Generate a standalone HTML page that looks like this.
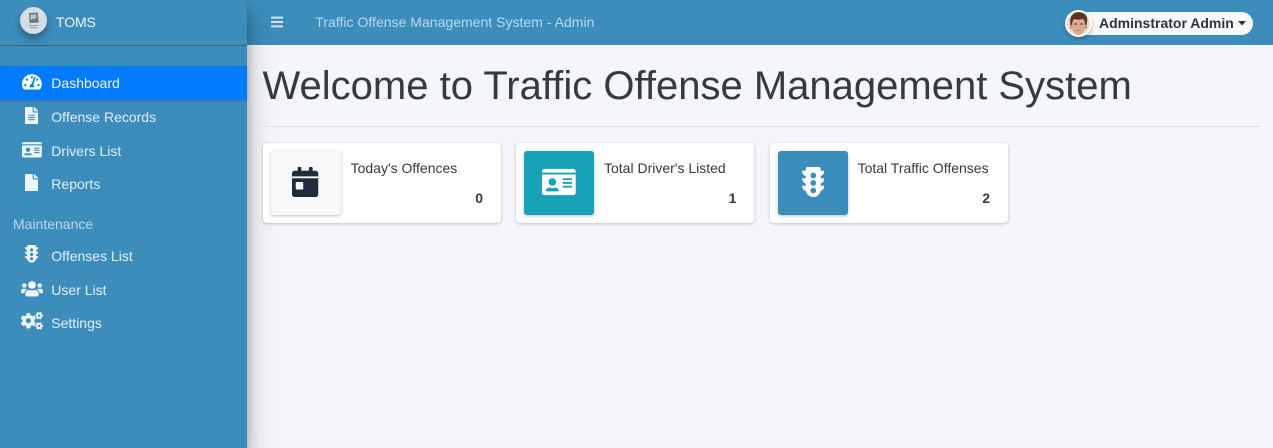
<!DOCTYPE html>
<html><head><meta charset="utf-8"><title>TOMS</title>
<style>
*{box-sizing:border-box}
html,body{margin:0;padding:0;width:1273px;height:448px;overflow:hidden;background:#f4f6f9;font-family:"Liberation Sans",sans-serif;color:#343a40;font-size:14px}
div,span,svg{position:absolute;white-space:nowrap}
#top{left:0;top:0;width:1273px;height:45px;background:#3c8dbc}
#side{left:0;top:0;width:247px;height:448px;background:#3c8dbc;box-shadow:0 14px 28px rgba(0,0,0,.25),0 10px 10px rgba(0,0,0,.22)}
#line{left:0;top:45px;width:247px;height:1px;background:#46606f}
#active{left:0;top:66px;width:247px;height:34px;background:#007bff;box-shadow:0 1px 3px rgba(0,0,0,.2)}
.nav{left:51.300px;font-size:14px;line-height:20px;color:#e4eefa}
.nav.a{color:#f0f6ff}
.i{fill:#eef5fd}
.card{top:143px;width:238px;height:80px;background:#fff;border-radius:4px;box-shadow:0 0 1px rgba(0,0,0,.125),0 1px 3px rgba(0,0,0,.2)}
.box{left:8px;top:8px;width:70px;height:64px;border-radius:3px;box-shadow:0 1px 3px rgba(0,0,0,.25)}
.lbl{top:15px;font-size:14px;line-height:20px;color:#343a40}
.num{top:45px;right:18px;font-size:14px;line-height:20px;font-weight:700;color:#343a40}
</style></head><body>
<div id="top"></div>
<div id="side"></div>
<div id="line"></div>

<div style="left:20px;top:7px;width:27px;height:27px;border-radius:50%;background:#d4dee5;box-shadow:0 5px 8px rgba(0,0,0,.3)"></div>
<svg style="left:27px;top:12px" width="13" height="18" viewBox="0 0 13 18"><path d="M2 1l8-.5 1 1 .5 9-9 .5z" fill="#6d777d"/><path d="M3.500 2.500h6v3l-2 2-2-1-2 2z" fill="#b9c3c9"/><path d="M1.500 13h10v1h-10zM2.500 15.200h8v1h-8z" fill="#98a3a9"/></svg>
<div style="left:56px;top:12px;font-size:14px;letter-spacing:-.1px;line-height:20px;color:#f2f6fa">TOMS</div>

<div style="left:315.300px;top:12px;font-size:14px;line-height:20px;letter-spacing:.02px;color:#b9d9ef">Traffic Offense Management System - Admin</div>
<svg style="left:271px;top:15px" width="12.250" height="14" viewBox="0 0 448 512"><path fill="#d3e6f3" d="M16 132h416c8.837 0 16-7.163 16-16V76c0-8.837-7.163-16-16-16H16C7.163 60 0 67.163 0 76v40c0 8.837 7.163 16 16 16zm0 160h416c8.837 0 16-7.163 16-16v-40c0-8.837-7.163-16-16-16H16c-8.837 0-16 7.163-16 16v40c0 8.837 7.163 16 16 16zm0 160h416c8.837 0 16-7.163 16-16v-40c0-8.837-7.163-16-16-16H16c-8.837 0-16 7.163-16 16v40c0 8.837 7.163 16 16 16z"/></svg>

<div style="left:1069px;top:12px;width:184px;height:23px;border-radius:12px;background:#f8f9fb"></div>
<div style="left:1065px;top:10px;width:27px;height:27px;border-radius:50%;background:#fff;box-shadow:0 2px 4px rgba(0,0,0,.25)"></div>
<svg style="left:1067px;top:12px" width="23" height="23" viewBox="0 0 23 23"><defs><clipPath id="c"><circle cx="11.500" cy="11.500" r="11.500"/></clipPath></defs><g clip-path="url(#c)"><rect width="23" height="23" fill="#e8d8cf"/><path d="M3 11.500h17v5H3z" fill="#c48c6e"/><path d="M5 8c3 1 9 1 13-1 .8 3 .8 7 0 10-1 3-4 6-6.500 6S6 20 5 17c-.8-3-.8-6 0-9z" fill="#dcaa8e"/><path d="M3.500 12.500C2 5 6 0 12 0s10 5 7.500 12.500l-1.500.5c0-2.500-.5-4.500-1.800-6-3 1-6.500 1-9 .2C5.500 8.500 5 10.500 5 13z" fill="#5e3524"/><path d="M7 11.500h3v1H7zM13 11.500h3v1h-3z" fill="#4c3026"/><path d="M9.500 18h4v.8h-4z" fill="#a96a55"/></g></svg>
<div style="left:1099px;top:13px;font-size:14px;line-height:20px;font-weight:700;color:#2c3440">Adminstrator Admin</div>
<svg style="left:1238px;top:21px" width="8" height="5" viewBox="0 0 8 5"><path d="M0 0h8L4 4.500z" fill="#2c3440"/></svg>

<div id="active"></div>

<svg style="left:22px;top:73px" width="19.800" height="17.600" viewBox="0 0 576 512"><path fill="#f4f8ff" d="M288 32C128.940 32 0 160.940 0 320c0 52.800 14.250 102.260 39.060 144.800 5.610 9.620 16.300 15.200 27.440 15.200h443c11.140 0 21.830-5.580 27.440-15.200C561.750 422.260 576 372.800 576 320c0-159.060-128.940-288-288-288zm0 64c14.710 0 26.580 10.130 30.320 23.650-1.110 2.260-2.640 4.230-3.450 6.670l-9.220 27.670c-5.130 3.490-10.970 6.010-17.640 6.010-17.670 0-32-14.330-32-32S270.330 96 288 96zM96 384c-17.670 0-32-14.330-32-32s14.330-32 32-32 32 14.330 32 32-14.330 32-32 32zm48-160c-17.670 0-32-14.330-32-32s14.330-32 32-32 32 14.330 32 32-14.330 32-32 32zm246.770-72.410l-61.330 184C343.130 347.330 352 364.540 352 384c0 11.720-3.380 22.550-8.880 32H232.880c-5.500-9.450-8.880-20.280-8.880-32 0-33.940 26.500-61.430 59.900-63.590l61.340-184.010c4.170-12.560 17.730-19.450 30.360-15.170 12.570 4.190 19.350 17.790 15.170 30.360zm14.660 57.200l15.520-46.550c3.470-1.290 7.130-2.230 11.050-2.230 17.670 0 32 14.330 32 32s-14.330 32-32 32c-11.380-.01-20.890-6.280-26.570-15.220zM480 384c-17.670 0-32-14.330-32-32s14.330-32 32-32 32 14.330 32 32-14.330 32-32 32z"/></svg>
<div class="nav a" style="top:73px">Dashboard</div>

<svg style="left:25.200px;top:106.600px" width="13.200" height="17.600" viewBox="0 0 384 512"><path class="i" d="M224 136V0H24C10.700 0 0 10.700 0 24v464c0 13.300 10.700 24 24 24h336c13.300 0 24-10.700 24-24V160H248c-13.200 0-24-10.800-24-24zm64 236c0 6.600-5.400 12-12 12H108c-6.600 0-12-5.400-12-12v-8c0-6.600 5.400-12 12-12h168c6.600 0 12 5.400 12 12v8zm0-64c0 6.600-5.400 12-12 12H108c-6.600 0-12-5.400-12-12v-8c0-6.600 5.400-12 12-12h168c6.600 0 12 5.400 12 12v8zm0-72v8c0 6.600-5.400 12-12 12H108c-6.600 0-12-5.400-12-12v-8c0-6.600 5.400-12 12-12h168c6.600 0 12 5.400 12 12zm96-114.100v6.100H256V0h6.100c6.400 0 12.500 2.500 17 7l97.900 98c4.500 4.500 7 10.600 7 16.900z"/></svg>
<div class="nav" style="top:107px">Offense Records</div>

<svg style="left:21.900px;top:140.500px" width="19.800" height="17.600" viewBox="0 0 576 512"><path class="i" d="M528 32H48C21.500 32 0 53.500 0 80v16h576V80c0-26.500-21.500-48-48-48zM0 432c0 26.500 21.500 48 48 48h480c26.500 0 48-21.500 48-48V128H0v304zm352-232c0-4.400 3.600-8 8-8h144c4.400 0 8 3.600 8 8v16c0 4.400-3.600 8-8 8H360c-4.400 0-8-3.600-8-8v-16zm0 64c0-4.400 3.600-8 8-8h144c4.400 0 8 3.600 8 8v16c0 4.400-3.600 8-8 8H360c-4.400 0-8-3.600-8-8v-16zm0 64c0-4.400 3.600-8 8-8h144c4.400 0 8 3.600 8 8v16c0 4.400-3.600 8-8 8H360c-4.400 0-8-3.600-8-8v-16zM176 192c35.300 0 64 28.700 64 64s-28.700 64-64 64-64-28.700-64-64 28.700-64 64-64zM67.100 396.200C75.500 370.500 99.600 352 128 352h8.200c12.300 5.100 25.700 8 39.800 8s27.600-2.900 39.800-8h8.200c28.400 0 52.500 18.500 60.900 44.200 3.200 9.900-5.200 19.800-15.600 19.800H82.700c-10.400 0-18.800-10-15.600-19.800z"/></svg>
<div class="nav" style="top:141px">Drivers List</div>

<svg style="left:25.200px;top:173.700px" width="13.200" height="17.600" viewBox="0 0 384 512"><path class="i" d="M224 136V0H24C10.700 0 0 10.700 0 24v464c0 13.300 10.700 24 24 24h336c13.300 0 24-10.700 24-24V160H248c-13.200 0-24-10.800-24-24zm160-14.100v6.100H256V0h6.100c6.400 0 12.500 2.500 17 7l97.900 98c4.500 4.500 7 10.600 7 16.900z"/></svg>
<div class="nav" style="top:174px">Reports</div>

<div style="left:13px;top:214px;font-size:14px;line-height:20px;color:#bcd6ea">Maintenance</div>

<svg style="left:25.200px;top:245.200px" width="13.200" height="17.600" viewBox="0 0 384 512"><path class="i" d="M384 192h-64v-37.880c37.200-13.220 64-48.380 64-90.120h-64V32c0-17.670-14.330-32-32-32H96C78.330 0 64 14.330 64 32v32H0c0 41.740 26.800 76.900 64 90.120V192H0c0 41.740 26.800 76.900 64 90.120V320H0c0 42.840 28.250 78.690 66.990 91.050C79.420 468.720 130.600 512 192 512s112.580-43.280 125.010-100.950C355.750 398.690 384 362.840 384 320h-64v-37.880c37.200-13.220 64-48.380 64-90.120zM192 448c-26.510 0-48-21.490-48-48 0-26.500 21.490-48 48-48s48 21.490 48 48c0 26.510-21.490 48-48 48zm0-128c-26.510 0-48-21.490-48-48 0-26.500 21.490-48 48-48s48 21.490 48 48c0 26.510-21.490 48-48 48zm0-128c-26.510 0-48-21.490-48-48 0-26.500 21.490-48 48-48s48 21.490 48 48c0 26.510-21.490 48-48 48z"/></svg>
<div class="nav" style="top:246px">Offenses List</div>

<svg style="left:20.500px;top:280px" width="22" height="17.600" viewBox="0 0 640 512"><path class="i" d="M96 224c35.300 0 64-28.700 64-64s-28.700-64-64-64-64 28.700-64 64 28.700 64 64 64zm448 0c35.300 0 64-28.700 64-64s-28.700-64-64-64-64 28.700-64 64 28.700 64 64 64zm32 32h-64c-17.600 0-33.500 7.100-45.100 18.600 40.300 22.100 68.900 62 75.100 109.400h66c17.700 0 32-14.300 32-32v-32c0-35.300-28.700-64-64-64zm-256 0c61.900 0 112-50.100 112-112S381.900 32 320 32 208 82.100 208 144s50.100 112 112 112zm76.800 32h-8.300c-20.800 10-43.900 16-68.500 16s-47.600-6-68.500-16h-8.300C179.600 288 128 339.600 128 403.200V432c0 26.500 21.500 48 48 48h288c26.500 0 48-21.500 48-48v-28.800c0-63.600-51.600-115.200-115.200-115.200zm-223.700-13.400C161.500 263.100 145.600 256 128 256H64c-35.300 0-64 28.700-64 64v32c0 17.700 14.300 32 32 32h65.900c6.300-47.400 34.900-87.300 75.200-109.400z"/></svg>
<div class="nav" style="top:280px">User List</div>

<svg style="left:20.500px;top:312.200px" width="22" height="17.600" viewBox="0 0 640 512"><path class="i" d="M512.100 191l-8.200 14.300c-3 5.300-9.400 7.500-15.100 5.400-11.800-4.400-22.600-10.700-32.100-18.600-4.600-3.800-5.800-10.500-2.800-15.700l8.200-14.300c-6.900-8-12.300-17.300-15.900-27.400h-16.500c-6 0-11.200-4.300-12.200-10.300-2-12-2.100-24.600 0-37.100 1-6 6.200-10.400 12.200-10.400h16.500c3.600-10.100 9-19.400 15.900-27.400l-8.200-14.300c-3-5.200-1.900-11.900 2.800-15.700 9.500-7.900 20.400-14.200 32.100-18.600 5.700-2.100 12.100.1 15.100 5.400l8.200 14.300c10.500-1.900 21.200-1.900 31.700 0L552 6.300c3-5.300 9.400-7.500 15.100-5.400 11.800 4.400 22.600 10.700 32.100 18.600 4.600 3.800 5.800 10.500 2.800 15.700l-8.200 14.300c6.900 8 12.300 17.300 15.900 27.400h16.500c6 0 11.200 4.300 12.200 10.300 2 12 2.100 24.600 0 37.100-1 6-6.200 10.400-12.200 10.400h-16.500c-3.600 10.100-9 19.400-15.900 27.400l8.200 14.300c3 5.200 1.900 11.900-2.800 15.700-9.500 7.900-20.400 14.200-32.100 18.600-5.700 2.100-12.100-.1-15.100-5.400l-8.200-14.300c-10.400 1.900-21.200 1.900-31.700 0zm-10.500-58.800c38.500 29.600 82.400-14.300 52.800-52.800-38.500-29.700-82.400 14.300-52.800 52.800zM386.300 286.100l33.700 16.800c10.100 5.800 14.500 18.100 10.500 29.100-8.900 24.200-26.400 46.400-42.600 65.800-7.400 8.900-20.200 11.100-30.300 5.300l-29.100-16.800c-16 13.700-34.600 24.600-54.900 31.700v33.600c0 11.600-8.300 21.600-19.700 23.600-24.600 4.200-50.400 4.400-75.900 0-11.500-2-20-11.900-20-23.600V418c-20.300-7.200-38.900-18-54.900-31.700L74 403c-10 5.800-22.900 3.600-30.300-5.300-16.200-19.400-33.300-41.600-42.200-65.700-4-10.900.4-23.200 10.500-29.100l33.300-16.800c-3.900-20.900-3.900-42.400 0-63.400L12 205.800c-10.100-5.800-14.600-18.100-10.500-29 8.900-24.200 26-46.400 42.200-65.800 7.400-8.900 20.200-11.100 30.300-5.300l29.100 16.800c16-13.700 34.600-24.600 54.900-31.700V57.100c0-11.500 8.200-21.500 19.600-23.500 24.600-4.200 50.500-4.400 76-.1 11.500 2 20 11.900 20 23.600v33.600c20.300 7.200 38.900 18 54.900 31.700l29.100-16.800c10-5.800 22.900-3.600 30.300 5.300 16.200 19.400 33.200 41.600 42.100 65.800 4 10.900.1 23.200-10 29.100l-33.700 16.800c3.900 21 3.900 42.500 0 63.500zm-117.600 21.100c59.200-77-28.700-164.900-105.700-105.700-59.200 77 28.700 164.900 105.700 105.700zm243.400 182.700l-8.200 14.300c-3 5.300-9.400 7.500-15.100 5.400-11.800-4.400-22.600-10.700-32.100-18.600-4.600-3.800-5.800-10.500-2.800-15.700l8.200-14.300c-6.900-8-12.300-17.300-15.900-27.400h-16.500c-6 0-11.200-4.300-12.200-10.300-2-12-2.100-24.600 0-37.100 1-6 6.200-10.400 12.200-10.400h16.500c3.600-10.100 9-19.400 15.900-27.400l-8.200-14.300c-3-5.200-1.900-11.900 2.800-15.700 9.500-7.900 20.400-14.200 32.100-18.600 5.700-2.100 12.100.1 15.100 5.400l8.200 14.300c10.500-1.900 21.200-1.900 31.700 0l8.200-14.300c3-5.300 9.400-7.500 15.100-5.400 11.800 4.400 22.600 10.700 32.100 18.600 4.600 3.800 5.800 10.500 2.800 15.700l-8.200 14.300c6.900 8 12.300 17.300 15.900 27.400h16.500c6 0 11.200 4.300 12.200 10.300 2 12 2.100 24.600 0 37.100-1 6-6.200 10.400-12.200 10.400h-16.500c-3.600 10.100-9 19.400-15.900 27.400l8.200 14.300c3 5.200 1.900 11.900-2.800 15.700-9.500 7.900-20.400 14.200-32.100 18.600-5.700 2.100-12.100-.1-15.100-5.400l-8.200-14.300c-10.400 1.900-21.200 1.900-31.700 0zM501.600 431c38.500 29.600 82.400-14.300 52.800-52.800-38.500-29.600-82.400 14.300-52.800 52.800z"/></svg>
<div class="nav" style="top:313px">Settings</div>

<div style="left:262.500px;top:62px;font-size:40px;line-height:48px;color:#343a40">Welcome to Traffic Offense Management System</div>
<div style="left:263px;top:126px;width:998px;height:1px;background:#dee2e6"></div>

<div class="card" style="left:263px">
  <div class="box" style="background:#f8f9fa"></div>
  <svg style="left:29.300px;top:24.200px" width="26.250" height="30" viewBox="0 0 448 512"><path fill="#1f2d3d" d="M0 464c0 26.500 21.500 48 48 48h352c26.500 0 48-21.500 48-48V192H0v272zm64-192c0-8.800 7.200-16 16-16h96c8.800 0 16 7.200 16 16v96c0 8.800-7.200 16-16 16H80c-8.800 0-16-7.200-16-16v-96zM400 64h-48V16c0-8.800-7.200-16-16-16h-32c-8.800 0-16 7.200-16 16v48H160V16c0-8.800-7.200-16-16-16h-32c-8.800 0-16 7.200-16 16v48H48C21.500 64 0 85.500 0 112v48h448v-48c0-26.500-21.500-48-48-48z"/></svg>
  <div class="lbl" style="left:87.600px">Today's Offences</div>
  <div class="num">0</div>
</div>

<div class="card" style="left:516px">
  <div class="box" style="background:#17a2b8"></div>
  <svg style="left:26.100px;top:24.200px" width="33.750" height="30" viewBox="0 0 576 512"><path fill="#fff" d="M528 32H48C21.500 32 0 53.500 0 80v16h576V80c0-26.500-21.500-48-48-48zM0 432c0 26.500 21.500 48 48 48h480c26.500 0 48-21.500 48-48V128H0v304zm352-232c0-4.400 3.600-8 8-8h144c4.400 0 8 3.600 8 8v16c0 4.400-3.600 8-8 8H360c-4.400 0-8-3.600-8-8v-16zm0 64c0-4.400 3.600-8 8-8h144c4.400 0 8 3.600 8 8v16c0 4.400-3.600 8-8 8H360c-4.400 0-8-3.600-8-8v-16zm0 64c0-4.400 3.600-8 8-8h144c4.400 0 8 3.600 8 8v16c0 4.400-3.600 8-8 8H360c-4.400 0-8-3.600-8-8v-16zM176 192c35.300 0 64 28.700 64 64s-28.700 64-64 64-64-28.700-64-64 28.700-64 64-64zM67.100 396.200C75.500 370.500 99.600 352 128 352h8.200c12.300 5.100 25.700 8 39.800 8s27.600-2.900 39.800-8h8.200c28.400 0 52.500 18.500 60.900 44.200 3.200 9.900-5.200 19.800-15.600 19.800H82.700c-10.400 0-18.800-10-15.600-19.800z"/></svg>
  <div class="lbl" style="left:88px">Total Driver's Listed</div>
  <div class="num" style="right:17.600px">1</div>
</div>

<div class="card" style="left:770px">
  <div class="box" style="background:#3c8dbc"></div>
  <svg style="left:31.700px;top:24.200px" width="22.500" height="30" viewBox="0 0 384 512"><path fill="#fff" d="M384 192h-64v-37.880c37.200-13.220 64-48.380 64-90.120h-64V32c0-17.670-14.330-32-32-32H96C78.330 0 64 14.330 64 32v32H0c0 41.740 26.800 76.900 64 90.120V192H0c0 41.740 26.800 76.900 64 90.120V320H0c0 42.840 28.250 78.690 66.990 91.050C79.420 468.720 130.600 512 192 512s112.580-43.280 125.010-100.950C355.750 398.690 384 362.840 384 320h-64v-37.880c37.200-13.220 64-48.380 64-90.120zM192 448c-26.510 0-48-21.490-48-48 0-26.500 21.490-48 48-48s48 21.490 48 48c0 26.510-21.490 48-48 48zm0-128c-26.510 0-48-21.490-48-48 0-26.500 21.490-48 48-48s48 21.490 48 48c0 26.510-21.490 48-48 48zm0-128c-26.510 0-48-21.490-48-48 0-26.500 21.490-48 48-48s48 21.490 48 48c0 26.510-21.490 48-48 48z"/></svg>
  <div class="lbl" style="left:87.600px">Total Traffic Offenses</div>
  <div class="num">2</div>
</div>
</body></html>
